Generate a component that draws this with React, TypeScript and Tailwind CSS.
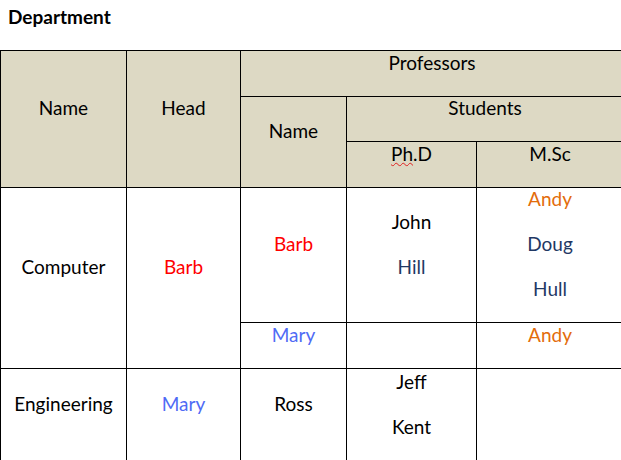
const cell = "border border-black align-middle text-center p-0";
const head = cell + " bg-[#ddd9c4]";

function P({ children, className = "" }: { children: React.ReactNode; className?: string }) {
  return <p className={"leading-[21px] mb-[24px] last:mb-[23px] " + className}>{children}</p>;
}

export default function App() {
  return (
    <div className="w-[621px] h-[460px] overflow-hidden bg-white text-black font-['Lato','Liberation_Sans',sans-serif]">
      <div className="h-[50px] pl-[8px] pt-[5px] text-[19px] leading-[24px] font-bold">Department</div>
      <table className="table-fixed border-collapse w-[623px] text-[19px]">
        <colgroup>
          <col className="w-[126px]" />
          <col className="w-[114px]" />
          <col className="w-[106px]" />
          <col className="w-[130px]" />
          <col className="w-[147px]" />
        </colgroup>
        <tbody>
          <tr className="h-[46px]">
            <td rowSpan={3} className={head}><P>Name</P></td>
            <td rowSpan={3} className={head}><P>Head</P></td>
            <td colSpan={3} className={head}><P>Professors</P></td>
          </tr>
          <tr className="h-[45px]">
            <td rowSpan={2} className={head}><P>Name</P></td>
            <td colSpan={2} className={head}><P>Students</P></td>
          </tr>
          <tr className="h-[46px]">
            <td className={head}>
              <P>
                <span className="underline decoration-wavy decoration-[#e02020] decoration-1 underline-offset-[1px]">Ph</span>.D
              </P>
            </td>
            <td className={head}><P>M.Sc</P></td>
          </tr>
          <tr className="h-[135px]">
            <td rowSpan={2} className={cell}><P>Computer</P></td>
            <td rowSpan={2} className={cell}><P className="text-[#ff0000]">Barb</P></td>
            <td className={cell}><P className="text-[#ff0000]">Barb</P></td>
            <td className={cell}>
              <P>John</P>
              <P className="text-[#1f3864]">Hill</P>
            </td>
            <td className={cell}>
              <P className="text-[#e36c0a]">Andy</P>
              <P className="text-[#1f3864]">Doug</P>
              <P className="text-[#1f3864]">Hull</P>
            </td>
          </tr>
          <tr className="h-[46px]">
            <td className={cell}><P className="text-[#4f6bf5]">Mary</P></td>
            <td className={cell}></td>
            <td className={cell}><P className="text-[#e36c0a]">Andy</P></td>
          </tr>
          <tr className="h-[93px]">
            <td className={cell}><P>Engineering</P></td>
            <td className={cell}><P className="text-[#4f6bf5]">Mary</P></td>
            <td className={cell}><P>Ross</P></td>
            <td className={cell}>
              <P>Jeff</P>
              <P>Kent</P>
            </td>
            <td className={cell}></td>
          </tr>
        </tbody>
      </table>
    </div>
  );
}
